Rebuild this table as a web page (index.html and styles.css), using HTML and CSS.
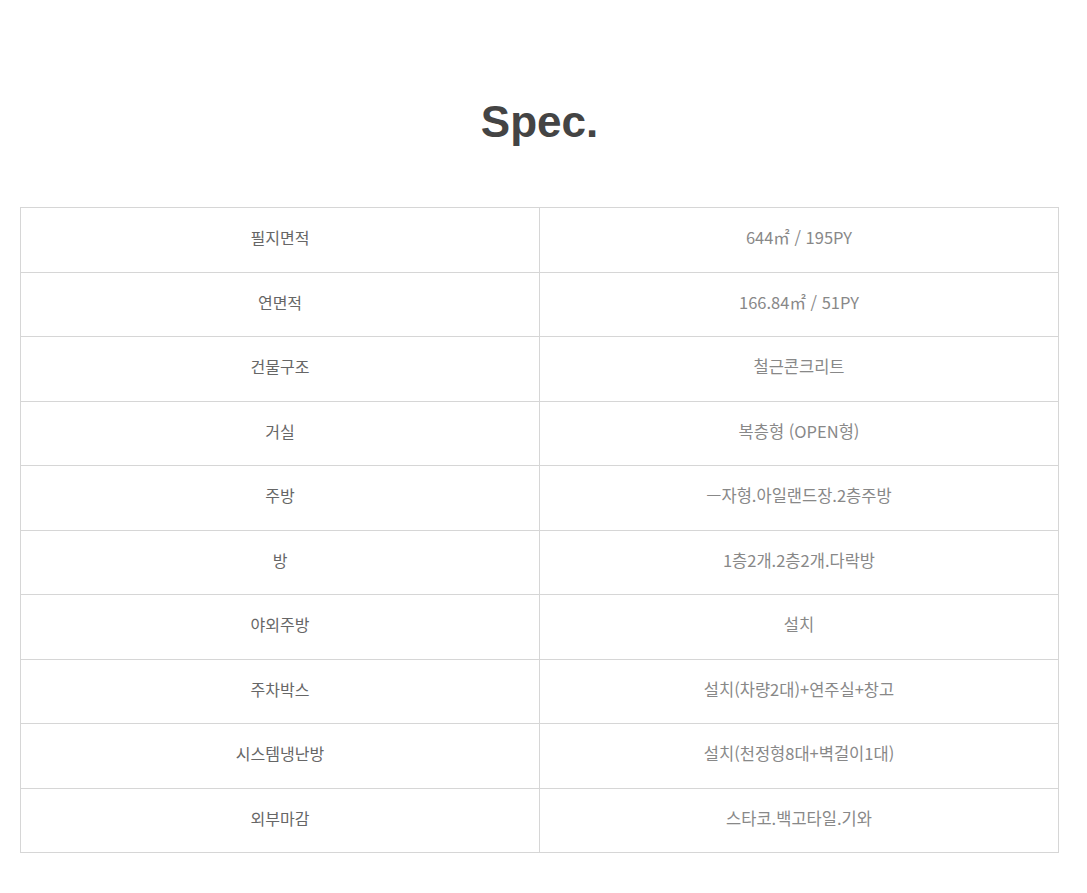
FILE: index.html
```html
<!DOCTYPE html>
<html lang="ko">
<head>
<meta charset="utf-8">
<link rel="stylesheet" href="styles.css">
</head>
<body>
<section class="spec">
  <h2 class="spec-title">Spec.</h2>
  <table class="spec-table">
    <tbody>
      <tr><th>필지면적</th><td>644㎡ / 195PY</td></tr>
      <tr><th>연면적</th><td>166.84㎡ / 51PY</td></tr>
      <tr><th>건물구조</th><td>철근콘크리트</td></tr>
      <tr><th>거실</th><td>복층형 (OPEN형)</td></tr>
      <tr><th>주방</th><td>ㅡ자형.아일랜드장.2층주방</td></tr>
      <tr><th>방</th><td>1층2개.2층2개.다락방</td></tr>
      <tr><th>야외주방</th><td>설치</td></tr>
      <tr><th>주차박스</th><td>설치(차량2대)+연주실+창고</td></tr>
      <tr><th>시스템냉난방</th><td>설치(천정형8대+벽걸이1대)</td></tr>
      <tr><th>외부마감</th><td>스타코.백고타일.기와</td></tr>
    </tbody>
  </table>
</section>
</body>
</html>
```

FILE: styles.css
```css
html, body {
  margin: 0;
  padding: 0;
  background: #fff;
}
.spec {
  padding: 95px 0 0 20px;
}
.spec-title {
  margin: 0 0 58px 0;
  width: 1039px;
  text-align: center;
  font-family: "Liberation Sans", Arial, sans-serif;
  font-weight: 700;
  font-size: 44px;
  line-height: 54px;
  color: #444;
}
.spec-table {
  width: 1039px;
  border-collapse: collapse;
  table-layout: fixed;
  font-family: "Noto Sans CJK KR", "Noto Sans", sans-serif;
}
.spec-table th,
.spec-table td {
  border: 1px solid #d6d6d6;
  height: 58.5px;
  padding: 0 0 5px 0;
  text-align: center;
  vertical-align: middle;
  font-weight: 400;
}
.spec-table th {
  color: #666;
  font-size: 16px;
}
.spec-table td {
  color: #888;
  font-size: 16.5px;
}
```
